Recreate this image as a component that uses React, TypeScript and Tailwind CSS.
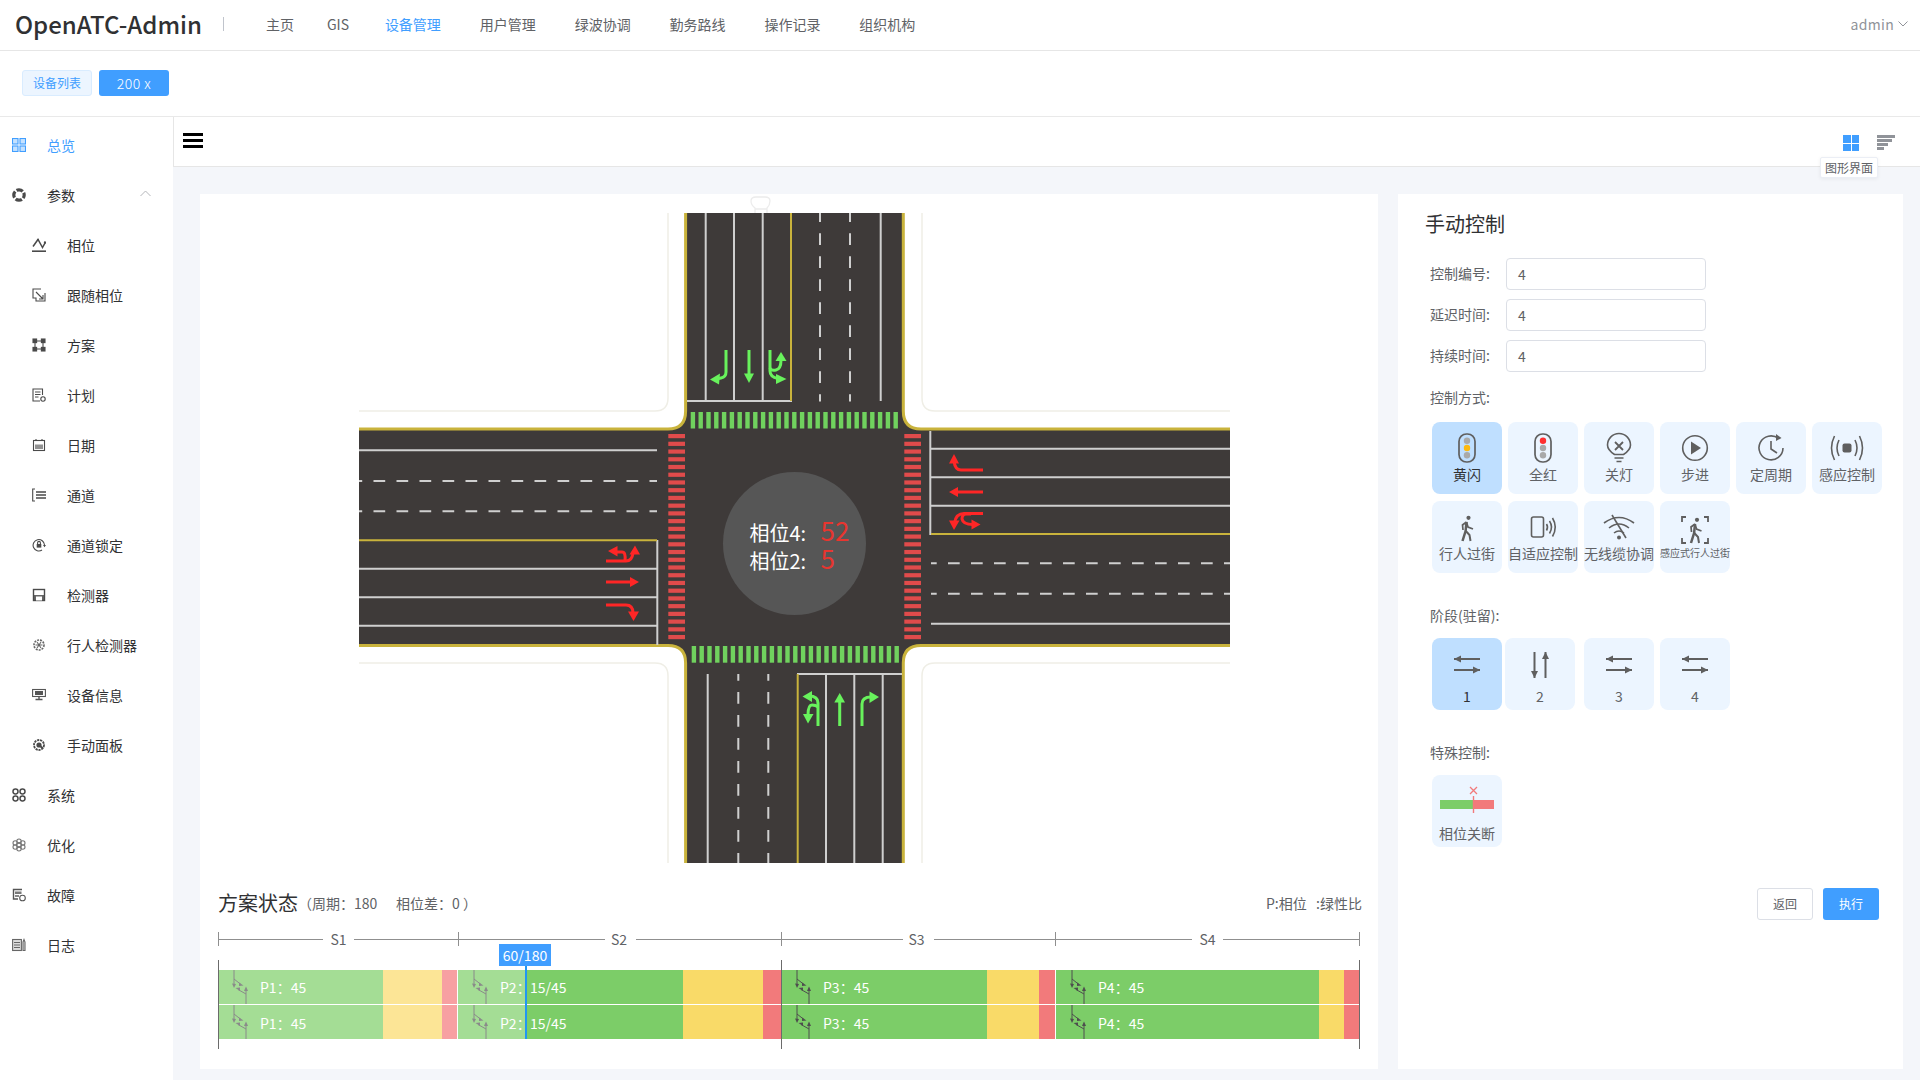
import React from "react";

const G = "#68f25c";
const R = "#ff2626";
const range = (n: number) => Array.from({ length: n }, (_, i) => i);

function ArrowPath({ d, head, color }: { d: string[]; head: string[]; color: string }) {
  return (
    <g>
      {d.map((p) => (
        <path key={p} d={p} fill="none" stroke={color} strokeWidth={3} />
      ))}
      {head.map((p) => (
        <polygon key={p} points={p} fill={color} />
      ))}
    </g>
  );
}

function Intersection() {
  const yel = "#c9b33c";
  const line = "#cfcfcf";
  const dashed = "11.7 11.3";
  return (
    <svg width={871} height={669} viewBox="359 194 871 669" className="block">
      <g fill="none" stroke="#efeee6" strokeWidth={1.5}>
        <path d="M359 411 H655 Q668 411 668 398 V213" />
        <path d="M922 213 V398 Q922 411 935 411 H1230" />
        <path d="M359 663 H655 Q668 663 668 676 V863" />
        <path d="M922 863 V676 Q922 663 935 663 H1230" />
      </g>
      <path d="M755 213 V208 Q751 205 751 201 Q751 197 756 197 H765 Q770 197 770 201 Q770 205 767 208 V213 M755 209 H767" fill="none" stroke="#ececec" strokeWidth={1.3} />
      <path
        d="M359 429 H668 Q685.6 429 685.6 411 V213 H903.3 V411 Q903.3 429 921 429 H1230 V645.6 H921 Q903.3 645.6 903.3 663 V863 H685.6 V663 Q685.6 645.6 668 645.6 H359 Z"
        fill="#3e3a39"
      />
      <g fill="none" stroke={yel} strokeWidth={3}>
        <path d="M359 429 H668 Q685.6 429 685.6 411 V213" />
        <path d="M903.3 213 V411 Q903.3 429 921 429 H1230" />
        <path d="M359 645.6 H668 Q685.6 645.6 685.6 663 V863" />
        <path d="M903.3 863 V663 Q903.3 645.6 921 645.6 H1230" />
      </g>

      {/* crossings */}
      {range(27).map((i) => (
        <rect key={"t" + i} x={690.7 + i * 7.8} y={412} width={4.4} height={16.5} fill="#70d25e" />
      ))}
      {range(27).map((i) => (
        <rect key={"b" + i} x={691.7 + i * 7.8} y={646} width={4.4} height={16.7} fill="#70d25e" />
      ))}
      {range(27).map((i) => (
        <rect key={"l" + i} x={668.3} y={434 + i * 7.73} width={16.7} height={4.2} fill="#e04b4b" />
      ))}
      {range(27).map((i) => (
        <rect key={"r" + i} x={904.3} y={434 + i * 7.73} width={16.7} height={4.2} fill="#e04b4b" />
      ))}

      {/* north leg */}
      <g stroke={line} strokeWidth={2} fill="none">
        <path d="M705.7 213 V401 M734 213 V401 M762.7 213 V401 M880.7 213 V401" />
        <path d="M687 401 H792" />
        <path d="M820 213 V401.6 M850 213 V401.6" strokeDasharray={dashed} strokeDashoffset={2.7} />
      </g>
      <path d="M791 213 V401" stroke={yel} strokeWidth={2} />
      {/* south leg */}
      <g stroke={line} strokeWidth={2} fill="none">
        <path d="M707.7 674 V863 M826 674 V863 M854.3 674 V863 M882.7 674 V863" />
        <path d="M797 674 H902" />
        <path d="M738.3 674 V863 M768.3 674 V863" strokeDasharray={dashed} strokeDashoffset={5} />
      </g>
      <path d="M797.7 674 V863" stroke={yel} strokeWidth={2} />
      {/* west leg */}
      <g stroke={line} strokeWidth={2} fill="none">
        <path d="M359 450.3 H657 M359 568.7 H657 M359 597.3 H657 M359 625.7 H657" />
        <path d="M657.3 540 V645" />
        <path d="M350.5 481 H657 M350.5 511.3 H657" strokeDasharray={dashed} />
      </g>
      <path d="M359 540.3 H657" stroke={yel} strokeWidth={2} />
      {/* east leg */}
      <g stroke={line} strokeWidth={2} fill="none">
        <path d="M931 448.7 H1230 M931 477.3 H1230 M931 505.7 H1230 M931 623.7 H1230" />
        <path d="M930.3 431 V535" />
        <path d="M931 563.3 H1230 M931 593.7 H1230" strokeDasharray={dashed} strokeDashoffset={6} />
      </g>
      <path d="M931 534 H1230" stroke={yel} strokeWidth={2} />

      {/* north arrows */}
      <ArrowPath color={G} d={["M726 350 V372 Q726 377 721 378 L716 379"]} head={["710,379.5 720,373.5 719,384.5"]} />
      <ArrowPath color={G} d={["M749 350 V376"]} head={["749,383 744,373.5 754,373.5"]} />
      <ArrowPath
        color={G}
        d={["M770 350 V371 Q770 377 778 378.5", "M770 368 Q771 371 776 370 Q781 369 781 360"]}
        head={["786.5,379 776,374 776,384", "781,352 775.5,361 786.5,361"]}
      />
      {/* south arrows */}
      <ArrowPath color={G} d={["M818 726 V703 Q818 696 809 696", "M818 707 Q816 705 812 705 Q808 705 808 715"]} head={["802.5,696.5 812,691 812,702", "808,723.5 803,714 813.5,714"]} />
      <ArrowPath color={G} d={["M839.7 726 V700"]} head={["839.7,693 834.3,702.5 845,702.5"]} />
      <ArrowPath color={G} d={["M862 726 V704 Q862 697 871 697"]} head={["879,697 869.5,691.5 869.5,703"]} />
      {/* west arrows */}
      <ArrowPath
        color={R}
        d={["M606 561 H626 Q632 561 633 553", "M625 561 Q626 552 622 552 H614"]}
        head={["635,545.5 629.5,554.5 640,554.5", "608,551 617.5,546 617.5,556.5"]}
      />
      <ArrowPath color={R} d={["M606 582 H632"]} head={["639,582 630,577 630,587"]} />
      <ArrowPath color={R} d={["M606 605 H626 Q633 605 633 613"]} head={["633.5,621 628,611.5 639,611.5"]} />
      {/* east arrows */}
      <ArrowPath color={R} d={["M983 470 H961 Q955 470 954 461"]} head={["954,454 949,463.5 959,463.5"]} />
      <ArrowPath color={R} d={["M983 492 H956"]} head={["949,492 958,487 958,497"]} />
      <ArrowPath
        color={R}
        d={["M983 513.5 H964 Q956 513.5 954.5 523", "M971 514 H966 Q962 514 962 519 Q963 524.5 973 524.5"]}
        head={["954,530 949,520.5 959.5,520.5", "980.5,524.5 971.5,519.5 971.5,529.5"]}
      />
    </svg>
  );
}

/* ---------- sidebar icons ---------- */
const ic = "#4a4a4a";
const S = ({ children, c = ic }: { children: React.ReactNode; c?: string }) => (
  <svg width={14} height={14} viewBox="0 0 14 14" fill="none" stroke={c} strokeWidth={1.1} className="block">
    {children}
  </svg>
);

const IconOverview = () => (
  <S c="#409eff">
    <rect x="0.5" y="0.5" width="5.5" height="5.5" fill="#c6e2ff" />
    <rect x="8" y="0.5" width="5.5" height="5.5" fill="#c6e2ff" />
    <rect x="0.5" y="8" width="5.5" height="5.5" fill="#c6e2ff" />
    <rect x="8" y="8" width="5.5" height="5.5" fill="#c6e2ff" />
  </S>
);
const IconParam = () => (
  <S>
    <circle cx="7" cy="7" r="5.2" strokeWidth="3.2" strokeDasharray="6.6 1.6" strokeDashoffset="3.3" />
  </S>
);
const IconPhase = () => (
  <S>
    <path d="M0 13.2 H14" strokeWidth="1.6" />
    <path d="M1 8.5 L6 1.5 L10.5 9.5 L13.5 4" strokeWidth="1.5" />
    <circle cx="6" cy="2" r="1.1" fill={ic} stroke="none" />
    <circle cx="13" cy="4.5" r="1.2" fill={ic} stroke="none" />
  </S>
);
const IconFollow = () => (
  <S>
    <path d="M9 1 H1 V10 H4 V13 H13 V5" />
    <path d="M4 4 L11 11 M11 7 V11 H7" />
  </S>
);
const IconPlan = () => (
  <S>
    <rect x="1" y="1" width="3.6" height="3.6" fill={ic} />
    <rect x="9.4" y="1" width="3.6" height="3.6" fill={ic} />
    <rect x="1" y="9.4" width="3.6" height="3.6" fill={ic} />
    <rect x="9.4" y="9.4" width="3.6" height="3.6" fill={ic} />
    <path d="M3 3 H11 V11 H3 Z" />
  </S>
);
const IconSchedule = () => (
  <S>
    <path d="M10.5 7 V1 H1 V13 H8" />
    <path d="M3 4 H8.5 M3 6.5 H8.5 M3 9 H6.5" />
    <circle cx="11" cy="11" r="2.2" />
  </S>
);
const IconDate = () => (
  <S>
    <rect x="1.5" y="2.5" width="11" height="10" />
    <path d="M4 1 V3 M10 1 V3" />
    <rect x="3" y="6.5" width="8" height="4.5" fill={ic} stroke="none" opacity="0.6" />
  </S>
);
const IconChannel = () => (
  <S>
    <path d="M3 1 H0.7 V13 H3" />
    <path d="M4 4 H14 M4 7 H14 M4 10 H14" strokeWidth="1.3" />
  </S>
);
const IconLock = () => (
  <S>
    <path d="M12.5 7 A5.7 5.7 0 1 0 10 12" />
    <path d="M11 7 L14 7 L12.5 9.2 Z" fill={ic} stroke="none" />
    <rect x="4.7" y="6" width="4.6" height="3.6" fill={ic} stroke="none" />
    <path d="M5.6 6 V4.8 A1.4 1.4 0 0 1 8.4 4.8 V6" />
  </S>
);
const IconDetector = () => (
  <S>
    <rect x="1.5" y="1.5" width="11" height="11" strokeWidth="1.4" />
    <rect x="1.5" y="7" width="11" height="5.5" fill={ic} stroke="none" opacity="0.85" />
    <rect x="4" y="8.5" width="6" height="4" fill="#fff" stroke="none" />
  </S>
);
const IconPed = () => (
  <S c="#666">
    <circle cx="7" cy="7" r="5" strokeWidth="1.6" strokeDasharray="2 1" />
    <path d="M5 4 L9 10 M9 4 L5 10 M3.5 7 H10.5" />
  </S>
);
const IconDevice = () => (
  <S c="#555">
    <rect x="0.6" y="1.5" width="12.8" height="7" />
    <rect x="3" y="3" width="8" height="4" fill="#555" stroke="none" />
    <path d="M7 8.5 V11 M3.5 11.5 H10.5" strokeWidth="1.4" />
  </S>
);
const IconPanel = () => (
  <S>
    <circle cx="7" cy="7" r="5" strokeWidth="1.8" strokeDasharray="2.2 0.8" />
    <circle cx="7" cy="7" r="2.6" fill={ic} stroke="none" />
    <path d="M7 7 L11 10.5" strokeWidth="1.8" />
  </S>
);
const IconSystem = () => (
  <S>
    <rect x="1" y="1" width="5" height="5" rx="2.4" strokeWidth="1.5" />
    <rect x="8" y="1" width="5" height="5" rx="2.4" strokeWidth="1.5" />
    <rect x="1" y="8" width="5" height="5" rx="2.4" strokeWidth="1.5" />
    <rect x="8" y="8" width="5" height="5" rx="2.4" strokeWidth="1.5" />
  </S>
);
const IconOpt = () => (
  <S c="#777">
    <circle cx="7" cy="7" r="2.5" />
    <circle cx="7" cy="3.2" r="2.2" />
    <circle cx="7" cy="10.8" r="2.2" />
    <circle cx="3.2" cy="5" r="2.2" />
    <circle cx="10.8" cy="5" r="2.2" />
    <circle cx="3.2" cy="9" r="2.2" />
    <circle cx="10.8" cy="9" r="2.2" />
  </S>
);
const IconFault = () => (
  <S c="#555">
    <path d="M10 1.5 H1.5 V11 H6" strokeWidth="1.4" />
    <rect x="3" y="3.5" width="6.5" height="2.5" fill="#777" stroke="none" />
    <path d="M3 8 H7" strokeWidth="1.4" />
    <circle cx="10.5" cy="10" r="2.8" />
  </S>
);
const IconLog = () => (
  <S c="#666">
    <rect x="0.6" y="1.5" width="8.8" height="11" fill="#ddd" />
    <path d="M2 4.5 H8 M2 7 H8 M2 9.5 H8" strokeWidth="1.2" />
    <path d="M11 4 L12 1.5 L13 4 V12.5 H11 Z" fill="#ddd" />
  </S>
);

type Item = { icon: React.ReactNode; label: string; sub?: boolean; active?: boolean; chevron?: boolean };
const menu: Item[] = [
  { icon: <IconOverview />, label: "总览", active: true },
  { icon: <IconParam />, label: "参数", chevron: true },
  { icon: <IconPhase />, label: "相位", sub: true },
  { icon: <IconFollow />, label: "跟随相位", sub: true },
  { icon: <IconPlan />, label: "方案", sub: true },
  { icon: <IconSchedule />, label: "计划", sub: true },
  { icon: <IconDate />, label: "日期", sub: true },
  { icon: <IconChannel />, label: "通道", sub: true },
  { icon: <IconLock />, label: "通道锁定", sub: true },
  { icon: <IconDetector />, label: "检测器", sub: true },
  { icon: <IconPed />, label: "行人检测器", sub: true },
  { icon: <IconDevice />, label: "设备信息", sub: true },
  { icon: <IconPanel />, label: "手动面板", sub: true },
  { icon: <IconSystem />, label: "系统" },
  { icon: <IconOpt />, label: "优化" },
  { icon: <IconFault />, label: "故障" },
  { icon: <IconLog />, label: "日志" },
];

function Sidebar() {
  return (
    <aside className="w-[173px] shrink-0 bg-white pt-[3px]">
      {menu.map((m) => (
        <div
          key={m.label}
          className={`flex h-[50px] items-center text-[14px] ${m.sub ? "pl-[32px]" : "pl-[12px]"} ${m.active ? "text-[#409eff]" : "text-[#303133]"}`}
        >
          {m.icon}
          <span className="ml-[21px]">{m.label}</span>
          {m.chevron && (
            <svg width={11} height={7} viewBox="0 0 11 7" fill="none" stroke="#b4b6ba" strokeWidth={1} className="ml-[65px] mb-[3px]">
              <path d="M0.5 6 L5.5 1 L10.5 6" />
            </svg>
          )}
        </div>
      ))}
    </aside>
  );
}

/* ---------- control icons ---------- */
const ci = "#5f5f5f";
const C = ({ children }: { children: React.ReactNode }) => (
  <svg width={40} height={32} viewBox="0 0 40 32" fill="none" stroke={ci} strokeWidth={1.6} className="block">
    {children}
  </svg>
);
const Light = ({ top, mid }: { top: string; mid: string }) => (
  <C>
    <rect x="12" y="2" width="16" height="28" rx="7.5" strokeWidth="1.7" />
    <circle cx="20" cy="8.8" r="3.2" fill={top} stroke="none" />
    <circle cx="20" cy="16" r="3.2" fill={mid} stroke="none" />
    <circle cx="20" cy="23.2" r="3.2" fill="#a9a9a9" stroke="none" />
  </C>
);
const Walker = () => (
  <g stroke={ci} fill="none">
    <circle cx="21.5" cy="3.8" r="2.1" fill={ci} stroke="none" />
    <path d="M19.5 8 L15.5 11 L16 16" strokeWidth="1.7" />
    <path d="M19.5 8 L21 13 L26 15" strokeWidth="1.7" />
    <path d="M19.5 8 L18.6 17 L15.5 27" strokeWidth="2.5" />
    <path d="M18.8 17 L22.5 21 L23.5 27" strokeWidth="2" />
  </g>
);

const controls: { label: string; icon: React.ReactNode; small?: boolean; on?: boolean; low?: boolean }[] = [
  { label: "黄闪", on: true, icon: <Light top="#a9a9a9" mid="#fdb90f" /> },
  { label: "全红", icon: <Light top="#ff3030" mid="#a9a9a9" /> },
  {
    label: "关灯",
    icon: (
      <C>
        <path d="M15.5 22.5 Q8.5 18 8.5 13 A11.5 11.5 0 0 1 31.5 13 Q31.5 18 24.5 22.5 Z" />
        <path d="M16 10 L24 18 M24 10 L16 18" strokeWidth="1.8" />
        <path d="M15.5 26 H24.5 M17.5 29.5 H22.5" strokeWidth="1.5" />
      </C>
    ),
  },
  {
    label: "步进",
    icon: (
      <C>
        <circle cx="20" cy="16" r="12.3" />
        <polygon points="16,9.5 16,22.5 26,16" fill={ci} stroke="none" />
      </C>
    ),
  },
  {
    label: "定周期",
    icon: (
      <C>
        <path d="M27.5 6.5 A12 12 0 1 0 32 16" />
        <polygon points="25,2 30.5,6 25,9" fill={ci} stroke="none" />
        <path d="M20 9 V17 L26 21" />
      </C>
    ),
  },
  {
    label: "感应控制",
    icon: (
      <C>
        <rect x="15.5" y="11.5" width="9" height="9" rx="2" fill={ci} stroke="none" />
        <path d="M12 8 Q8 16 12 24 M28 8 Q32 16 28 24" />
        <path d="M7.5 4 Q1.5 16 7.5 28 M32.5 4 Q38.5 16 32.5 28" />
      </C>
    ),
  },
  {
    label: "行人过街",
    low: true,
    icon: (
      <C>
        <Walker />
      </C>
    ),
  },
  {
    label: "自适应控制",
    low: true,
    icon: (
      <C>
        <rect x="8.5" y="3" width="12" height="20" rx="2" />
        <path d="M23.5 10 Q25.5 13 23.5 16.5 M26.5 7 Q30.5 13 26.5 19.5 M29.5 4 Q35 13 29.5 22.5" />
      </C>
    ),
  },
  {
    label: "无线缆协调",
    low: true,
    icon: (
      <C>
        <path d="M5 9 Q20 -2 35 9 M10 14 Q20 6 30 14 M15 19 Q20 15 25 19" />
        <circle cx="20" cy="23.5" r="2" fill={ci} stroke="none" />
        <path d="M13 1 L27 24" />
      </C>
    ),
  },
  {
    label: "感应式行人过街",
    small: true,
    low: true,
    icon: (
      <svg width={40} height={32} viewBox="0 0 40 32" fill="none" stroke={ci} strokeWidth={1.8} className="block">
        <path d="M7 8 V3 H11 M33 8 V3 H29 M7 24 V29 H11 M33 24 V29 H29" />
        <g transform="translate(0.5 2)">
          <Walker />
        </g>
      </svg>
    ),
  },
];

const HArrows = () => (
  <C>
    <path d="M7 11 H33" stroke={ci} strokeWidth="2" />
    <polygon points="7,11 14,7.5 14,14.5" fill={ci} stroke="none" />
    <path d="M7 22 H33" stroke={ci} strokeWidth="2" />
    <polygon points="33,22 26,18.5 26,25.5" fill={ci} stroke="none" />
  </C>
);
const VArrows = () => (
  <C>
    <path d="M14.5 4 V30" stroke={ci} strokeWidth="2" />
    <polygon points="14.5,30 11,23 18,23" fill={ci} stroke="none" />
    <path d="M25.5 30 V4" stroke={ci} strokeWidth="2" />
    <polygon points="25.5,4 22,11 29,11" fill={ci} stroke="none" />
  </C>
);

function CtlButton({
  label,
  icon,
  on,
  small,
  low,
  labelClass = "",
  className = "",
}: {
  label: string;
  icon: React.ReactNode;
  on?: boolean;
  small?: boolean;
  low?: boolean;
  labelClass?: string;
  className?: string;
}) {
  return (
    <div className={`flex h-[72px] w-[70px] flex-col items-center whitespace-nowrap rounded-[8px] ${low ? "pt-[13px]" : "pt-[10px]"} ${on ? "bg-[#bfdfff] text-[#303133]" : "bg-[#ecf5ff] text-[#606266]"} ${className}`}>
      {icon}
      <span className={`${small ? "text-[10px] leading-[20px]" : "text-[14px] leading-[20px]"} ${low ? "mt-[-3px]" : ""} ${labelClass}`}>{label}</span>
    </div>
  );
}

/* ---------- plan bars ---------- */
const PhaseGlyph = ({ c }: { c: string }) => (
  <svg width={20} height={34} viewBox="0 0 20 34" fill="none" stroke={c} strokeWidth={1} className="block shrink-0">
    <path d="M3 0 V15 M3 9 L10 14.5 M15 34 V20 M15 24 L7 19.5" />
    <polygon points="3,18 1,13.5 5,14" fill={c} stroke="none" />
    <polygon points="12.5,15.5 8,12.5 8,16" fill={c} stroke="none" />
    <polygon points="15,16.5 13,21 17,21" fill={c} stroke="none" />
    <polygon points="4.5,18 9,17.5 9,21" fill={c} stroke="none" />
  </svg>
);

function Row({ extra }: { extra: string }) {
  const t = `${extra} text-[14px] text-white leading-none`;
  return (
    <div className="flex h-[34px]">
      <div className="flex w-[165px] items-center bg-[#a4dd95] pl-[13px]">
        <PhaseGlyph c="#8a8a8a" />
        <span className={`ml-[9px] ${t}`}>P1：45</span>
      </div>
      <div className="w-[59px] bg-[#fce596]" />
      <div className="mr-[1px] w-[15px] bg-[#f7a0a2]" />
      <div className="flex w-[68px] items-center bg-[#a4dd95] pl-[13px]">
        <PhaseGlyph c="#8a8a8a" />
        <span className={`ml-[9px] ${t}`}>P2：</span>
      </div>
      <div className="flex w-[157px] items-center bg-[#7ccd68] pl-[4px]">
        <span className={t}>15/45</span>
      </div>
      <div className="w-[80px] bg-[#f9da68]" />
      <div className="w-[18px] bg-[#f27a7b]" />
      <div className="flex w-[206px] items-center bg-[#7ccd68] pl-[13px]">
        <PhaseGlyph c="#4e4e4e" />
        <span className={`ml-[9px] ${t}`}>P3：45</span>
      </div>
      <div className="w-[52px] bg-[#f9da68]" />
      <div className="mr-[1px] w-[16px] bg-[#f27a7b]" />
      <div className="flex w-[263px] items-center bg-[#7ccd68] pl-[13px]">
        <PhaseGlyph c="#4e4e4e" />
        <span className={`ml-[9px] ${t}`}>P4：45</span>
      </div>
      <div className="w-[25px] bg-[#f9da68]" />
      <div className="w-[16px] bg-[#f27a7b]" />
    </div>
  );
}

function RulerSeg({ label, cls, lab = "" }: { label: string; cls: string; lab?: string }) {
  return (
    <div className={`flex h-[14px] items-center border-l border-[#8f8f8f] ${cls}`}>
      <div className="h-px flex-1 bg-[#8f8f8f]" />
      <span className={`w-[31px] text-center text-[14px] leading-none text-[#606266] ${lab}`}>{label}</span>
      <div className="h-px flex-1 bg-[#8f8f8f]" />
    </div>
  );
}

export default function App() {
  return (
    <div className="flex h-[1080px] w-[1920px] flex-col overflow-hidden bg-white font-['Noto_Sans_CJK_SC','Noto_Sans',sans-serif]">
      {/* header */}
      <header className="flex h-[51px] shrink-0 items-center border-b border-[#e6e6e6] pb-[2px] pl-[15px] pr-[12px]">
        <span className="w-[185px] whitespace-nowrap text-[24px] font-medium leading-none text-[#303133]">OpenATC-Admin</span>
        <div className="ml-[23px] h-[14px] w-px bg-[#c0c4cc]" />
        <nav className="ml-[42px] flex items-center gap-[38.9px] text-[14px] text-[#606266]">
          <span className="mr-[-6px]">主页</span>
          <span className="mr-[-3px]">GIS</span>
          <span className="text-[#409eff]">设备管理</span>
          <span>用户管理</span>
          <span>绿波协调</span>
          <span>勤务路线</span>
          <span>操作记录</span>
          <span>组织机构</span>
        </nav>
        <div className="ml-auto flex items-center gap-[4px] text-[14px] tracking-[0.3px] text-[#909399]">
          <span>admin</span>
          <svg width={10} height={6} viewBox="0 0 10 6" fill="none" stroke="#909399" strokeWidth={1}>
            <path d="M0.5 0.5 L5 5 L9.5 0.5" />
          </svg>
        </div>
      </header>

      {/* tags */}
      <div className="flex h-[66px] shrink-0 items-center gap-[7px] border-b border-[#e9e9e9] pl-[22px] pb-[1px]">
        <span className="flex h-[26px] w-[70px] items-center justify-center rounded-[3px] border border-[#d9ecff] bg-[#ecf5ff] text-[12px] text-[#409eff]">设备列表</span>
        <span className="flex h-[26px] w-[70px] items-center justify-center rounded-[3px] bg-[#409eff] text-[14px] font-light tracking-[0.5px] text-white">200 x</span>
      </div>

      <div className="flex min-h-0 flex-1">
        <Sidebar />
        <main className="relative flex min-w-0 flex-1 flex-col bg-[#f4f6fa]">
          {/* toolbar */}
          <div className="flex h-[50px] shrink-0 items-start border-b border-l border-[#e6e6e6] bg-white pl-[9px] pr-[25px] pt-[16px]">
            <div className="flex w-[20px] flex-col gap-[3px]">
              <div className="h-[3px] bg-black" />
              <div className="h-[3px] bg-black" />
              <div className="h-[3px] bg-black" />
            </div>
            <div className="ml-auto mt-[2px] flex items-start gap-[18px]">
              <div className="grid h-[16px] w-[16px] grid-cols-2 gap-px">
                <div className="bg-[#409eff]" />
                <div className="bg-[#409eff]" />
                <div className="bg-[#409eff]" />
                <div className="bg-[#409eff]" />
              </div>
              <div className="flex w-[18px] flex-col gap-[1.5px]">
                <div className="h-[2.5px] w-[18px] bg-[#909399]" />
                <div className="h-[2.5px] w-[15px] bg-[#909399]" />
                <div className="h-[2.5px] w-[11px] bg-[#909399]" />
                <div className="h-[2.5px] w-[7px] bg-[#909399]" />
              </div>
            </div>
          </div>
          {/* tooltip */}
          <div className="absolute left-[1647px] top-[40px] z-10 flex h-[21px] w-[58px] items-center justify-center rounded-[2px] border border-[#ebeef5] bg-white text-[12px] text-[#606266] shadow-[0_1px_4px_rgba(0,0,0,0.06)]">
            图形界面
          </div>

          <div className="flex gap-[20px] pl-[27px] pt-[27px]">
            {/* left card */}
            <section className="h-[875px] w-[1178px] bg-white">
              <div className="relative ml-[159px] w-[871px]">
                <Intersection />
                <div className="absolute left-[364px] top-[278px] flex h-[143px] w-[143px] flex-col items-center justify-center rounded-full bg-[#565656] pt-[7px] text-[20px] text-white">
                  <div className="ml-[10px] flex h-[28px] w-[100px] items-baseline whitespace-nowrap leading-[28px]">
                    <span className="w-[71px]">相位4:</span>
                    <span className="text-[26px] leading-[20px] text-[#e8352f]">52</span>
                  </div>
                  <div className="ml-[10px] flex h-[28px] w-[100px] items-baseline whitespace-nowrap leading-[28px]">
                    <span className="w-[71px]">相位2:</span>
                    <span className="text-[26px] leading-[20px] text-[#e8352f]">5</span>
                  </div>
                </div>
              </div>
              <div className="ml-[18px] mt-[22px] flex h-[38px] w-[1144px] items-center justify-between pb-[2px]">
                <div className="flex items-center whitespace-nowrap">
                  <span className="text-[20px] text-[#303133]">方案状态</span>
                  <span className="text-[14px] text-[#606266]">（周期：180&nbsp;&nbsp;&nbsp;&nbsp;&nbsp;</span>
                  <span className="ml-[3px] text-[14px] text-[#606266]">相位差：0&nbsp;）</span>
                </div>
                <span className="whitespace-pre text-[14px] text-[#606266]">P:相位   :绿性比</span>
              </div>
              <div className="ml-[18px] mt-[9px] flex w-[1143px]">
                <RulerSeg label="S1" cls="w-[240px]" />
                <RulerSeg label="S2" cls="w-[323px]" lab="ml-[-1px] mr-[1px]" />
                <RulerSeg label="S3" cls="w-[274px]" lab="ml-[-2px] mr-[2px]" />
                <RulerSeg label="S4" cls="w-[305px] border-r" />
              </div>
              <div className="relative ml-[18px] mt-[14px] flex w-[1142px] flex-col gap-px py-[10px]">
                <Row extra="pb-[1px]" />
                <Row extra="pt-[1px]" />
                <div className="absolute bottom-0 left-0 top-0 w-px bg-[#6b6b6b]" />
                <div className="absolute bottom-0 left-[563px] top-0 w-px bg-[#6b6b6b]" />
                <div className="absolute bottom-0 right-0 top-0 w-px bg-[#6b6b6b]" />
                <div className="absolute bottom-[10px] left-[307px] top-[6px] w-[2px] bg-[#2196f3]" />
                <div className="absolute left-[281px] top-[-16px] flex h-[22px] w-[52px] items-center justify-center bg-[#409eff] text-[14px] text-white">60/180</div>
              </div>
            </section>

            {/* right card */}
            <section className="h-[875px] w-[505px] bg-white pl-[27px] pr-[24px] pt-[15px]">
              <h2 className="text-[20px] font-normal leading-[30px] text-[#303133]">手动控制</h2>
              <div className="ml-[5px] mt-[19px] flex flex-col gap-[9px]">
                {["控制编号:", "延迟时间:", "持续时间:"].map((l) => (
                  <div key={l} className="flex h-[32px] items-center text-[14px] text-[#606266]">
                    <span className="mb-[2px] w-[76px]">{l}</span>
                    <div className="flex h-[32px] w-[200px] items-center rounded-[4px] border border-[#dcdfe6] pl-[11px]">4</div>
                  </div>
                ))}
              </div>
              <div className="ml-[5px] mt-[15px] text-[14px] leading-[20px] text-[#606266]">控制方式:</div>
              <div className="ml-[7px] mt-[15px] grid grid-cols-[repeat(6,70px)] gap-x-[6px] gap-y-[7px]">
                {controls.map((c) => (
                  <CtlButton key={c.label} {...c} />
                ))}
              </div>
              <div className="ml-[5px] mt-[32px] text-[14px] leading-[20px] text-[#606266]">阶段(驻留):</div>
              <div className="ml-[7px] mt-[13px] flex">
                <CtlButton label="1" on icon={<HArrows />} labelClass="mt-[6px]" />
                <CtlButton label="2" icon={<VArrows />} labelClass="mt-[6px]" className="ml-[3px]" />
                <CtlButton label="3" icon={<HArrows />} labelClass="mt-[6px]" className="ml-[9px]" />
                <CtlButton label="4" icon={<HArrows />} labelClass="mt-[6px]" className="ml-[6px]" />
              </div>
              <div className="ml-[5px] mt-[32px] text-[14px] leading-[20px] text-[#606266]">特殊控制:</div>
              <div className="ml-[7px] mt-[13px]">
                <CtlButton
                  label="相位关断"
                  labelClass="mt-[6px]"
                  icon={
                    <svg width={60} height={32} viewBox="0 0 60 32" fill="none" className="block">
                      <path d="M33 2 L40 9 M40 2 L33 9" stroke="#f27a7b" strokeWidth={1.3} />
                      <rect x="3" y="15" width="33" height="9" fill="#7ccd68" />
                      <rect x="36" y="15" width="21" height="9" fill="#f27a7b" />
                      <path d="M36.5 11 V28" stroke="#f27a7b" strokeWidth={1.4} />
                    </svg>
                  }
                />
              </div>
              <div className="mt-[41px] flex justify-end gap-[10px] text-[12px]">
                <div className="flex h-[32px] w-[56px] items-center justify-center rounded-[3px] border border-[#dcdfe6] text-[#606266]">返回</div>
                <div className="flex h-[32px] w-[56px] items-center justify-center rounded-[3px] bg-[#409eff] text-white">执行</div>
              </div>
            </section>
          </div>
        </main>
      </div>
    </div>
  );
}
